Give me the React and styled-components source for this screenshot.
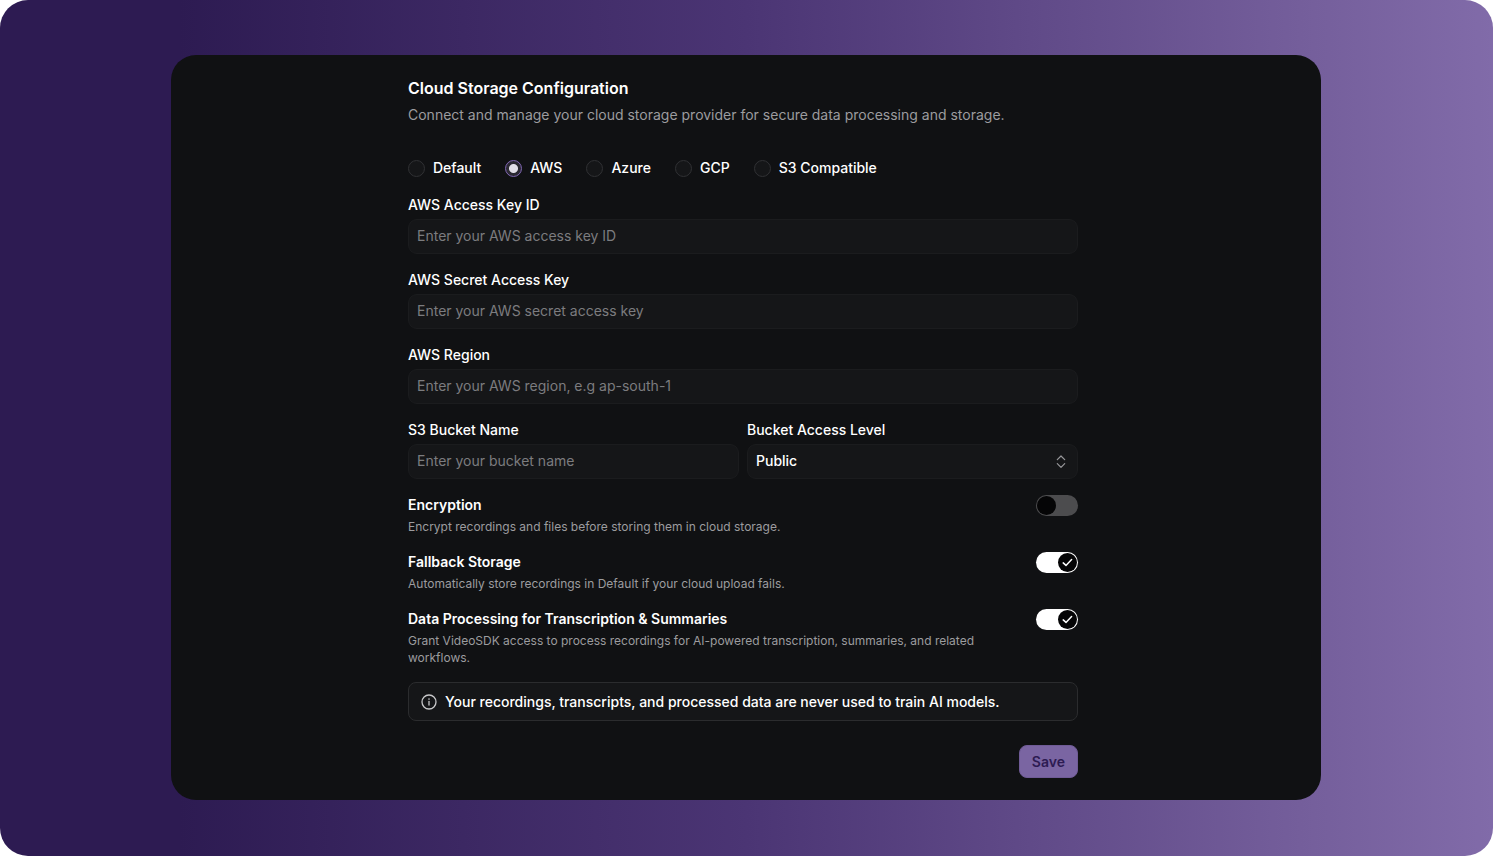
import React, { useState } from "react";
import styled, { createGlobalStyle } from "styled-components";

const GlobalStyle = createGlobalStyle`
  *, *::before, *::after { box-sizing: border-box; }
  body {
    margin: 0;
    background: #ffffff;
    font-family: Inter, "Liberation Sans", sans-serif;
  }
  input, select, button { font: inherit; }
`;

const Backdrop = styled.div`
  min-height: 100vh;
  display: flex;
  flex-direction: column;
  padding: 55px 172px 56px 171px;
  border-radius: 28px;
  background: linear-gradient(90deg, #2d1b52 12%, #4b3574 50%, #755f9c 88%, #816ba9 100%);

  @media (max-width: 1100px) {
    padding: 24px;
  }
`;

const Card = styled.main`
  flex: 1;
  display: flex;
  justify-content: center;
  padding: 21px 26px 22px 20px;
  border-radius: 25px;
  background: #101113;
  color: #ffffff;
`;

const Form = styled.form`
  flex: 1;
  max-width: 670px;
  display: flex;
  flex-direction: column;
`;

const Title = styled.h1`
  margin: 0;
  font-size: 16px;
  line-height: 24px;
  font-weight: 600;
`;

const Subtitle = styled.p`
  margin: 4px 0 0;
  font-size: 14px;
  line-height: 22px;
  color: #9c9c9f;
`;

const Providers = styled.div`
  display: flex;
  flex-wrap: wrap;
  gap: 8px 24px;
  margin: 32px 0 17px;
`;

const RadioLabel = styled.label`
  display: flex;
  align-items: center;
  gap: 8px;
  font-size: 14px;
  line-height: 20px;
  font-weight: 500;
`;

const Radio = styled.input`
  appearance: none;
  width: 17px;
  height: 17px;
  margin: 0;
  border: 1px solid #303134;
  border-radius: 50%;
  background: #151618;

  &:checked {
    border-color: #8066b4;
    background: radial-gradient(circle, #e2dfe8 4px, #2b2932 5px);
  }
`;

const Fields = styled.div`
  display: grid;
  grid-template-columns: 1fr 1fr;
  gap: 16px 8px;
`;

const Field = styled.div`
  grid-column: ${(p) => (p.$half ? "auto" : "1 / -1")};
  display: flex;
  flex-direction: column;
  gap: 4px;
`;

const FieldLabel = styled.label`
  font-size: 14px;
  line-height: 20px;
  font-weight: 500;
`;

const TextInput = styled.input`
  width: 100%;
  height: 35px;
  padding: 0 8px 2px;
  border: 1px solid #1b1c1e;
  border-radius: 9px;
  background: #151618;
  color: #ffffff;
  font-size: 14px;
  outline: none;

  &::placeholder { color: #7c7c7f; opacity: 1; }
  &:focus-visible { border: 1px solid #8066b4; }
`;

const SelectBox = styled.div`
  display: grid;
  align-items: center;

  & > * { grid-area: 1 / 1; }
`;

const Select = styled.select`
  appearance: none;
  width: 100%;
  height: 35px;
  padding: 0 32px 2px 8px;
  border: 1px solid #1b1c1e;
  border-radius: 9px;
  background: #151618;
  color: #ffffff;
  font-size: 14px;
  font-weight: 500;
`;

const SelectIcon = styled.svg`
  justify-self: end;
  margin-right: 9px;
  pointer-events: none;
`;

const Settings = styled.div`
  display: flex;
  flex-direction: column;
  gap: 17px;
  margin: 16px 0;
`;

const Setting = styled.div`
  display: flex;
  justify-content: space-between;
  align-items: flex-start;
  gap: 40px;
`;

const SettingText = styled.div`
  display: flex;
  flex-direction: column;
  gap: 3px;
`;

const SettingLabel = styled.label`
  font-size: 14px;
  line-height: 20px;
  font-weight: 600;
`;

const Hint = styled.p`
  margin: 0;
  font-size: 12px;
  line-height: 17px;
  color: #9c9c9f;
`;

const SwitchBox = styled.span`
  flex: none;
  display: grid;
  align-items: center;
  width: 42px;
  height: 21px;

  & > * { grid-area: 1 / 1; }
`;

const SwitchInput = styled.input`
  appearance: none;
  width: 42px;
  height: 21px;
  margin: 0;
  border-radius: 11px;
  background: #4c4c4e;
  cursor: pointer;

  &:checked { background: #ffffff; }
`;

const Thumb = styled.svg`
  justify-self: ${(p) => (p.$on ? "end" : "start")};
  margin: 0 1px;
  pointer-events: none;
`;

const Notice = styled.div`
  display: flex;
  align-items: center;
  gap: 8px;
  min-height: 39px;
  padding: 8px 12px;
  border: 1px solid #2b2c2e;
  border-radius: 8px;
  background: #151618;
  font-size: 14px;
  line-height: 20px;
  font-weight: 500;

  svg { flex: none; }
`;

const SaveButton = styled.button`
  align-self: flex-end;
  height: 33px;
  margin-top: 24px;
  padding: 0 12px;
  border: 1px solid #6f5b96;
  border-radius: 8px;
  background: #7a65a2;
  color: #2d1b52;
  font-size: 14px;
  font-weight: 600;
  cursor: pointer;
`;

const providers = ["Default", "AWS", "Azure", "GCP", "S3 Compatible"];

const textFields = [
  { id: "access-key", label: "AWS Access Key ID", placeholder: "Enter your AWS access key ID" },
  { id: "secret-key", label: "AWS Secret Access Key", placeholder: "Enter your AWS secret access key" },
  { id: "region", label: "AWS Region", placeholder: "Enter your AWS region, e.g ap-south-1" },
  { id: "bucket", label: "S3 Bucket Name", placeholder: "Enter your bucket name", half: true },
];

const settings = [
  { id: "encryption", label: "Encryption", hint: "Encrypt recordings and files before storing them in cloud storage.", on: false },
  { id: "fallback", label: "Fallback Storage", hint: "Automatically store recordings in Default if your cloud upload fails.", on: true },
  {
    id: "processing",
    label: "Data Processing for Transcription & Summaries",
    hint: "Grant VideoSDK access to process recordings for AI-powered transcription, summaries, and related workflows.",
    on: true,
  },
];

function SwitchSetting({ id, label, hint, on }) {
  const [checked, setChecked] = useState(on);
  return (
    <Setting>
      <SettingText>
        <SettingLabel htmlFor={id}>{label}</SettingLabel>
        <Hint id={`${id}-hint`}>{hint}</Hint>
      </SettingText>
      <SwitchBox>
        <SwitchInput
          id={id}
          type="checkbox"
          role="switch"
          aria-describedby={`${id}-hint`}
          checked={checked}
          onChange={(e) => setChecked(e.target.checked)}
        />
        <Thumb $on={checked} width="19" height="19" viewBox="0 0 19 19" fill="none" aria-hidden="true">
          <circle cx="9.5" cy="9.5" r="9.5" fill="#050506" />
          {checked && (
            <path d="M5.2 9.9 8 12.4 13.6 6.6" stroke="#fff" strokeWidth="1.5" strokeLinecap="round" strokeLinejoin="round" />
          )}
        </Thumb>
      </SwitchBox>
    </Setting>
  );
}

export default function App() {
  const [provider, setProvider] = useState("AWS");
  return (
    <>
      <GlobalStyle />
      <Backdrop>
        <Card>
          <Form onSubmit={(e) => e.preventDefault()}>
            <Title>Cloud Storage Configuration</Title>
            <Subtitle>Connect and manage your cloud storage provider for secure data processing and storage.</Subtitle>
            <Providers role="radiogroup" aria-label="Storage provider">
              {providers.map((name) => (
                <RadioLabel key={name}>
                  <Radio
                    type="radio"
                    name="provider"
                    value={name}
                    checked={provider === name}
                    onChange={() => setProvider(name)}
                  />
                  {name}
                </RadioLabel>
              ))}
            </Providers>
            <Fields>
              {textFields.map((f) => (
                <Field key={f.id} $half={f.half}>
                  <FieldLabel htmlFor={f.id}>{f.label}</FieldLabel>
                  <TextInput id={f.id} type="text" placeholder={f.placeholder} />
                </Field>
              ))}
              <Field $half>
                <FieldLabel htmlFor="level">Bucket Access Level</FieldLabel>
                <SelectBox>
                  <Select id="level" defaultValue="Public">
                    <option>Public</option>
                    <option>Private</option>
                  </Select>
                  <SelectIcon width="16" height="16" viewBox="0 0 16 16" fill="none" aria-hidden="true">
                    <path d="M4.3 5.7 8 2 11.7 5.7M4.3 9.7 8 13.4 11.7 9.7" stroke="#98989b" strokeWidth="1.2" strokeLinecap="round" strokeLinejoin="round" />
                  </SelectIcon>
                </SelectBox>
              </Field>
            </Fields>
            <Settings>
              {settings.map((s) => (
                <SwitchSetting key={s.id} {...s} />
              ))}
            </Settings>
            <Notice>
              <svg width="16" height="16" viewBox="0 0 16 16" fill="none" aria-hidden="true">
                <circle cx="8" cy="8" r="7" stroke="#c8c8ca" strokeWidth="1.3" />
                <path d="M8 7.4v3.6" stroke="#c8c8ca" strokeWidth="1.3" strokeLinecap="round" />
                <circle cx="8" cy="5.1" r="0.8" fill="#c8c8ca" />
              </svg>
              Your recordings, transcripts, and processed data are never used to train AI models.
            </Notice>
            <SaveButton type="submit">Save</SaveButton>
          </Form>
        </Card>
      </Backdrop>
    </>
  );
}
